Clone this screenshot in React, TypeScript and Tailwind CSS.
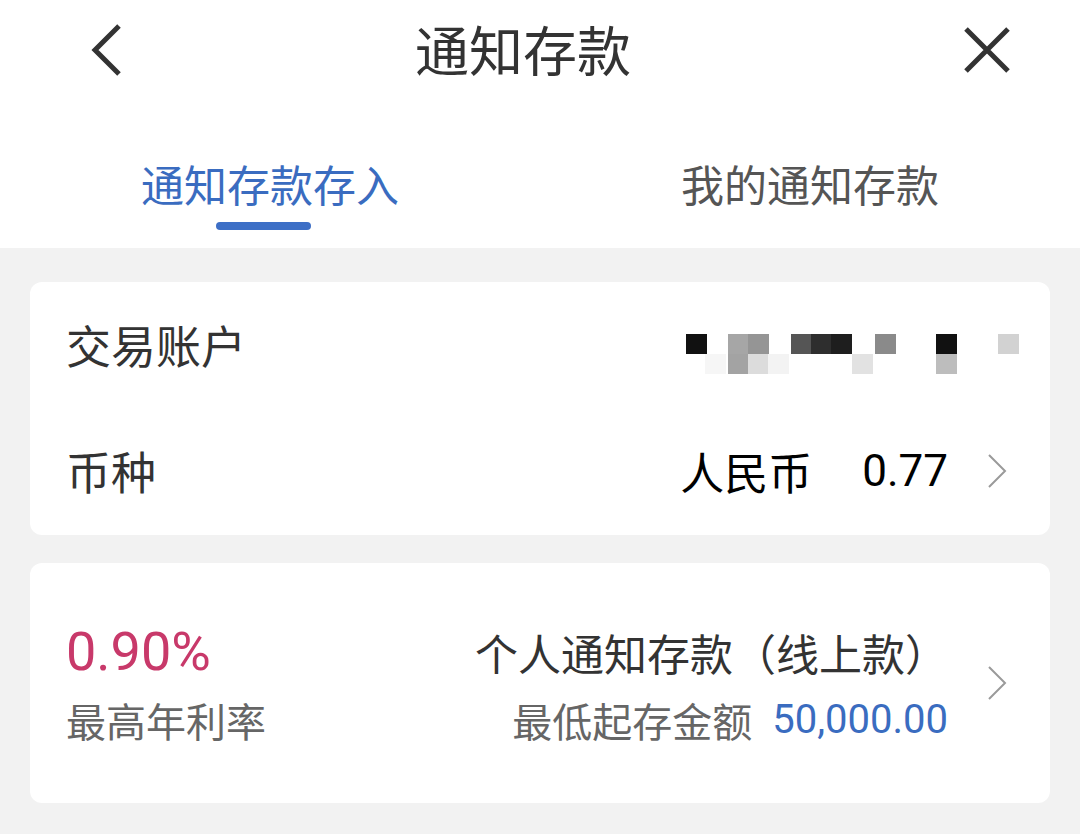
import { ReactNode } from "react";

const FONT = { fontFamily: '"Noto Sans CJK SC", "Noto Sans", sans-serif' };
const NUM = { fontFamily: "Roboto, sans-serif" };

function Chevron() {
  return (
    <svg width="22" height="36" viewBox="0 0 22 36" className="shrink-0">
      <path d="M3 2 L19 18 L3 34" fill="none" stroke="#9a9a9a" strokeWidth="2" />
    </svg>
  );
}

// pixelated account number, [x, y, colour] on a 20px grid offset from the mask origin
const cells: [number, number, string][] = [
  [0, 0, "#111"],
  [42, 0, "#a6a6a6"],
  [62, 0, "#959595"],
  [105, 0, "#555"],
  [125, 0, "#2e2e2e"],
  [145, 0, "#1e1e1e"],
  [189, 0, "#8a8a8a"],
  [250, 0, "#111"],
  [312, 0, "#d2d2d2"],
  [19, 20, "#f6f6f6"],
  [42, 20, "#a3a3a3"],
  [62, 20, "#dcdcdc"],
  [82, 20, "#f3f3f3"],
  [166, 20, "#e2e2e2"],
  [250, 20, "#bdbdbd"],
];

function MaskedAccount() {
  return (
    <svg width="340" height="44" viewBox="0 0 340 44">
      {cells.map(([x, y, c], i) => (
        <rect key={i} x={x} y={y} width="21" height="20" fill={c} />
      ))}
    </svg>
  );
}

function Row({ label, children }: { label: string; children: ReactNode }) {
  return (
    <div className="flex items-center justify-between pl-[36px] pr-[42px]">
      <span className="text-[45px] text-[#333]">{label}</span>
      {children}
    </div>
  );
}

export default function App() {
  return (
    <div className="w-[1080px] h-[834px] bg-[#f2f2f2] overflow-hidden" style={FONT}>
      <div className="bg-white">
        <div className="h-[100px] flex items-center">
          <svg width="36" height="56" viewBox="0 0 36 56" className="ml-[88px]">
            <path d="M31 4 L7 28 L31 52" fill="none" stroke="#333" strokeWidth="5" />
          </svg>
          <span className="ml-[291px] text-[54px] text-[#333] leading-none -mt-[2px]">通知存款</span>
          <svg width="50" height="50" viewBox="0 0 50 50" className="ml-auto mr-[68px]">
            <path d="M4 4 L46 46 M46 4 L4 46" stroke="#333" strokeWidth="5" />
          </svg>
        </div>
        <div className="h-[148px] grid grid-cols-2">
          <div className="flex flex-col items-center pt-[60px]">
            <span className="text-[43px] leading-[46px] text-[#3a6cc0]">通知存款存入</span>
            <div className="mt-[16px] mr-[14px] w-[95px] h-[8px] rounded-full bg-[#3d6fc6]" />
          </div>
          <div className="flex flex-col items-center pt-[60px]">
            <span className="text-[43px] leading-[46px] text-[#555]">我的通知存款</span>
          </div>
        </div>
      </div>

      <div className="px-[30px] pt-[34px] flex flex-col gap-[28px]">
        <div className="bg-white rounded-[12px] flex flex-col">
          <div className="h-[125px]">
            <Row label="交易账户">
              <div className="h-[125px] flex items-center pt-[22px] -mr-[18px]">
                <MaskedAccount />
              </div>
            </Row>
          </div>
          <div className="h-[128px] flex flex-col justify-center">
            <Row label="币种">
              <div className="flex items-center">
                <span className="text-[44px] text-black">人民币</span>
                <span className="ml-[50px] text-[44px] text-black" style={NUM}>
                  0.77
                </span>
                <span className="ml-[38px]">
                  <Chevron />
                </span>
              </div>
            </Row>
          </div>
        </div>

        <div className="bg-white rounded-[12px] h-[240px] flex items-center justify-between pl-[36px] pr-[42px]">
          <div className="flex flex-col">
            <span className="text-[54px] leading-[56px] text-[#c8396a]" style={NUM}>
              0.90%
            </span>
            <span className="mt-[18px] text-[40px] leading-[44px] text-[#666]">最高年利率</span>
          </div>
          <div className="flex items-center">
            <div className="flex flex-col items-end">
              <span className="text-[43px] leading-[56px] text-[#333]">个人通知存款（线上款）</span>
              <div className="mt-[18px] flex items-center">
                <span className="text-[40px] leading-[44px] text-[#666]">最低起存金额</span>
                <span className="ml-[20px] text-[40px] leading-[44px] text-[#3a6cc0]" style={NUM}>
                  50,000.00
                </span>
              </div>
            </div>
            <span className="ml-[38px]">
              <Chevron />
            </span>
          </div>
        </div>
      </div>
    </div>
  );
}
